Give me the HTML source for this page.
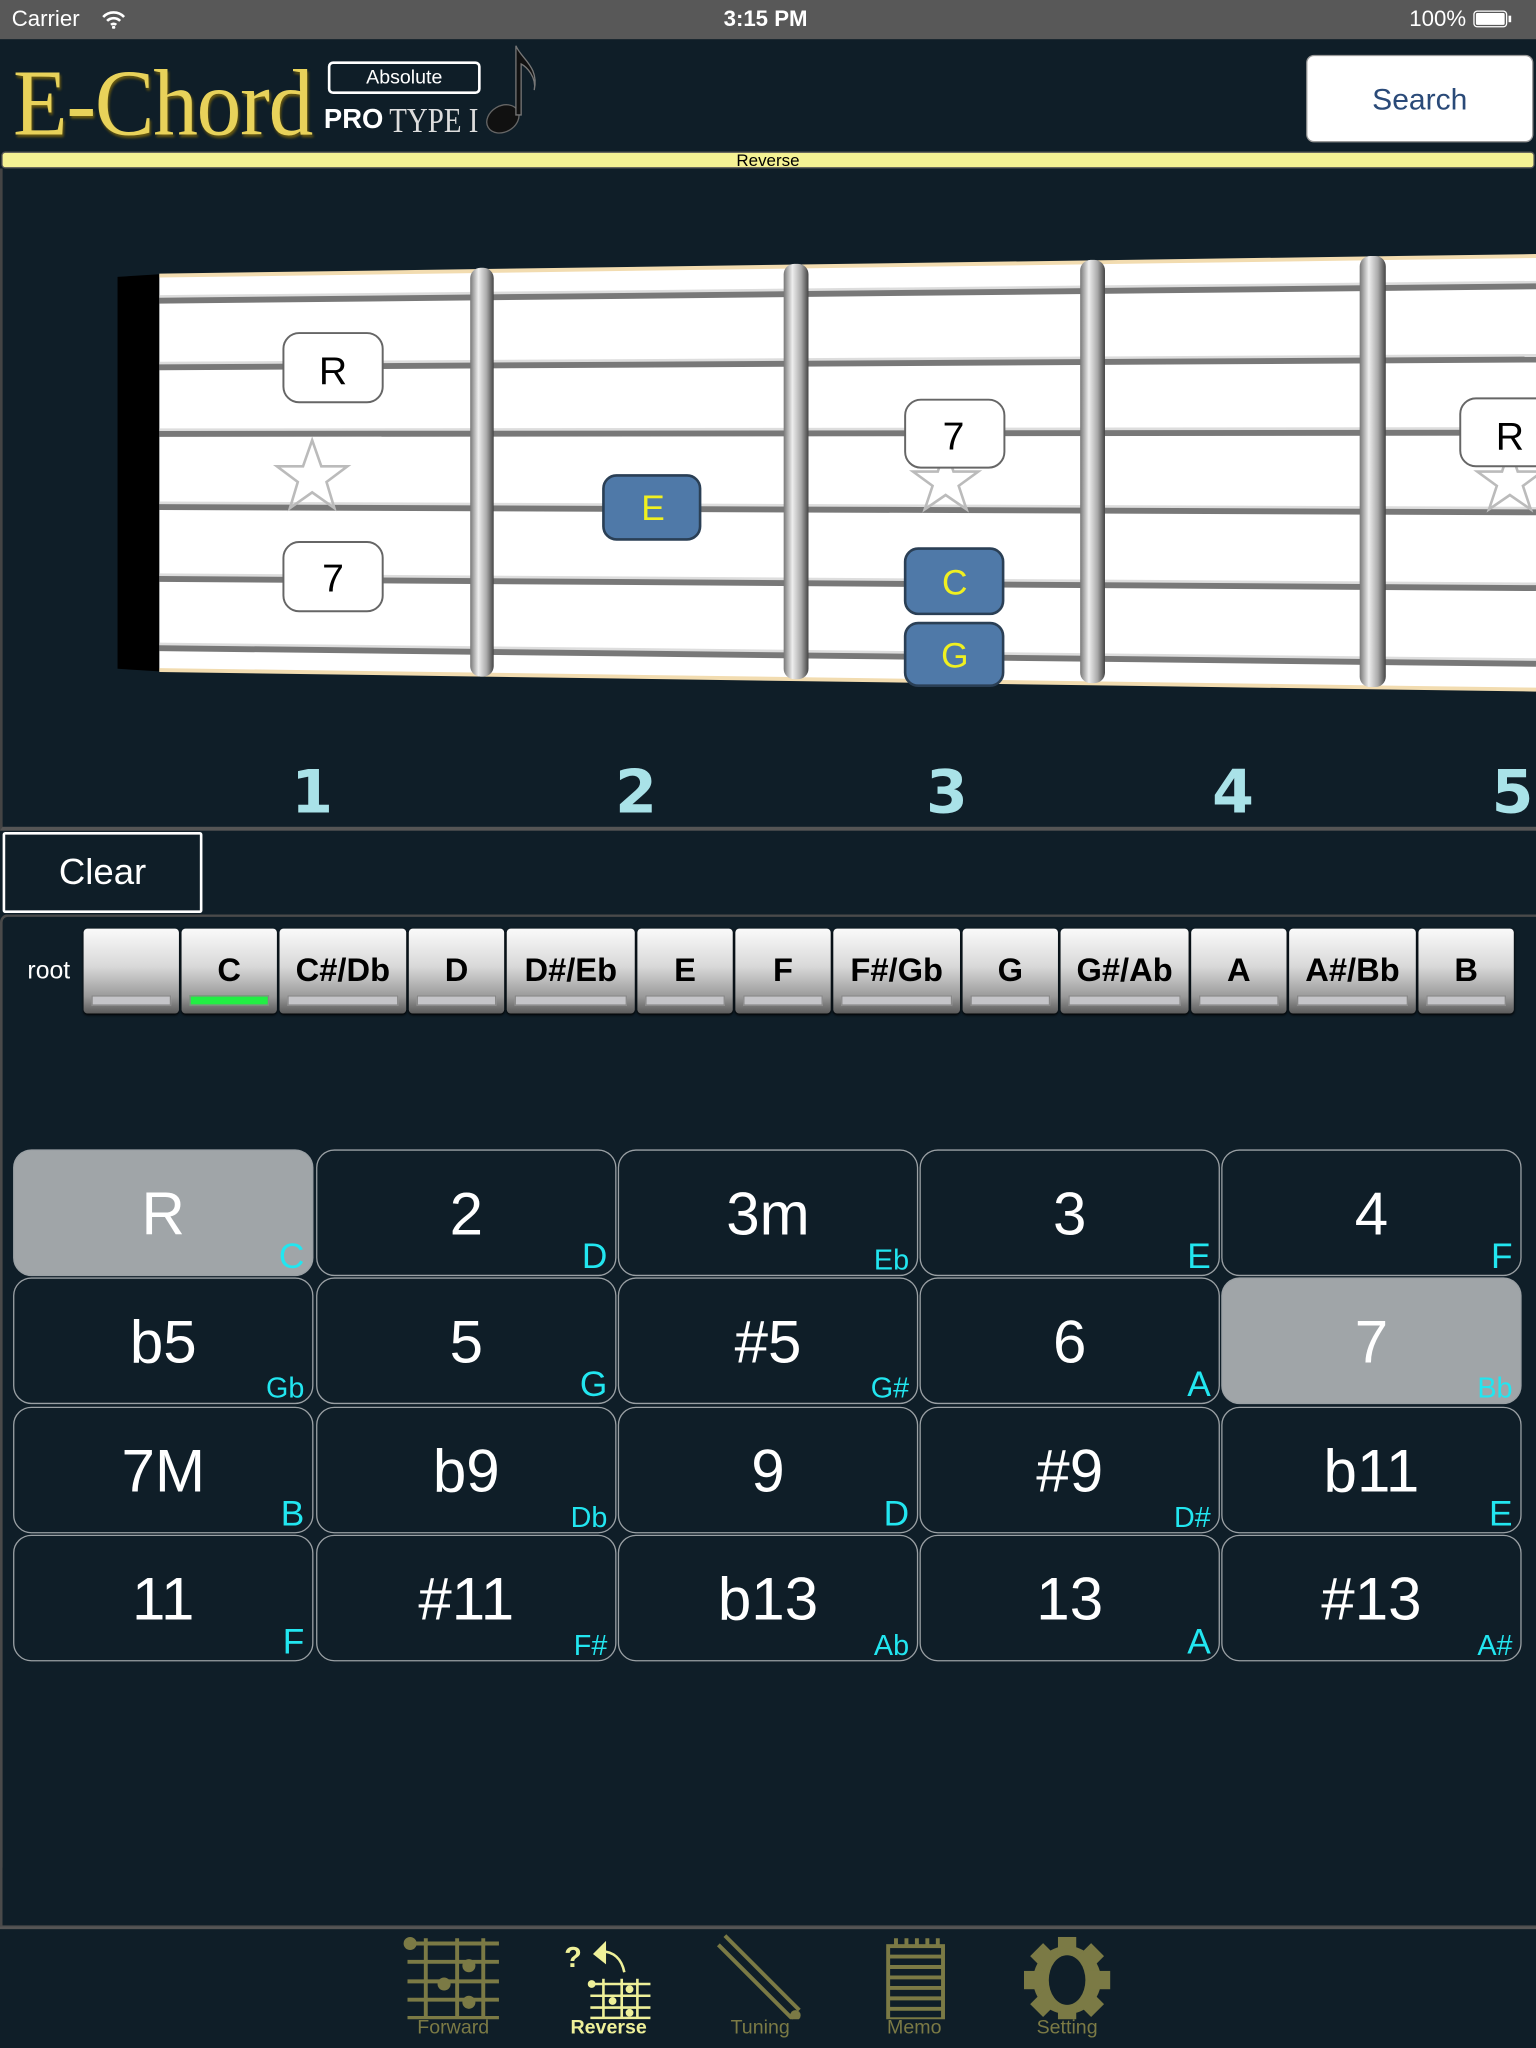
<!DOCTYPE html>
<html><head><meta charset="utf-8"><style>
*{margin:0;padding:0;box-sizing:border-box}
html,body{width:1536px;height:2048px;overflow:hidden;background:#0f1e28}
#w{position:absolute;left:0;top:0;width:1176px;height:1568px;transform:scale(1.306122);transform-origin:0 0;font-family:"Liberation Sans",sans-serif;background:#0f1e28;color:#fff}
.a{position:absolute}
.sb{left:0;top:0;width:1176px;height:30px;background:#585858;font-size:17px}
.rb{height:65px;top:711px;border-radius:3px;background:linear-gradient(#fafafa,#d8d8d8 45%,#9a9a9a 80%,#5a5a5a);color:#000;font-weight:bold;font-size:25px;text-align:center;line-height:64px;font-family:"Liberation Sans Narrow","Liberation Sans",sans-serif;box-shadow:0 1px 2px #000}
.rb i{position:absolute;left:6px;right:6px;bottom:6px;height:8px;background:#c4c4c8;border:1px solid #888}
.cell{width:230px;height:97px;border:1.5px solid #9aa0a4;border-radius:14px;text-align:center;font-size:46px;line-height:96px}
.cell b{position:absolute;right:6px;bottom:-2px;line-height:normal;font-weight:normal;color:#22e6f0;font-size:27px}
.cell b.s{font-size:22px}
.sel{background:#a0a5a8}
.tab{font-size:15px;color:#7b7a45;text-align:center;width:100px;top:1544px}
</style></head><body><div id="w">
<div class="a sb"><span class="a" style="left:9px;top:5px">Carrier</span>
<svg class="a" style="left:78px;top:8px" width="18" height="14" viewBox="0 0 18 14"><path d="M1 5a11 11 0 0 1 16 0M4 8a7 7 0 0 1 10 0M7 11a3 3 0 0 1 4 0" stroke="#fff" stroke-width="2" fill="none"/><circle cx="9" cy="13" r="1.3" fill="#fff"/></svg>
<span class="a" style="left:554px;top:5px;font-weight:bold;font-size:17px">3:15 PM</span>
<span class="a" style="left:1079px;top:5px">100%</span>
<div class="a" style="left:1128px;top:8px;width:26px;height:13px;border:1px solid #fff;border-radius:3px;padding:1px"><div style="width:100%;height:100%;background:#fff;border-radius:1px"></div></div>
<div class="a" style="left:1155px;top:12px;width:2px;height:5px;background:#fff"></div></div>

<div class="a" style="left:10px;top:38px;font-family:'Liberation Serif',serif;font-size:72px;color:#e8d25a;text-shadow:1px 2px 2px #6a5a10;letter-spacing:-1px;transform:scaleX(0.95);transform-origin:0 0">E-Chord</div>
<div class="a" style="left:251px;top:47px;width:117px;height:25px;border:2px solid #fff;border-radius:4px;text-align:center;font-size:15px;line-height:21px">Absolute</div>
<div class="a" style="left:248px;top:80px;font-size:21px;font-weight:bold">PRO</div>
<div class="a" style="left:298px;top:77px;font-family:'Liberation Serif',serif;font-size:27px;color:#ddd;transform:scaleX(0.82);transform-origin:0 0">TYPE I</div>
<svg class="a" style="left:368px;top:33px" width="50" height="72" viewBox="0 0 50 72"><ellipse cx="17" cy="58" rx="13" ry="10" transform="rotate(-30 17 58)" fill="#111" stroke="#666" stroke-width="1"/><path d="M27 55V2c4 10 18 16 14 34c2-10-6-18-10-20V55z" fill="#111" stroke="#777" stroke-width="1"/></svg>
<div class="a" style="left:1000px;top:42px;width:174px;height:67px;background:#fff;border-radius:6px;border:1px solid #999;color:#2a4a78;font-size:23px;text-align:center;line-height:66px">Search</div>

<div class="a" style="left:1px;top:116px;width:1174px;height:13px;background:#f5f294;border:1px solid #555;border-radius:3px;font-size:13px;color:#000;text-align:center;line-height:12px">Reverse</div>
<div class="a" style="left:0;top:129px;width:1176px;height:507px;border-left:2px solid #444;border-bottom:3px solid #555"></div>

<svg class="a" style="left:0;top:0" width="1176" height="640" viewBox="0 0 1176 640">
<defs><linearGradient id="fr" x1="0" x2="1"><stop offset="0" stop-color="#777"/><stop offset=".35" stop-color="#eee"/><stop offset=".7" stop-color="#aaa"/><stop offset="1" stop-color="#444"/></linearGradient></defs>
<polygon points="90,212 122,210 122,514 90,512" fill="#000"/>
<polygon points="122,210 1176,195 1176,529 122,514" fill="#fff"/>
<line x1="122" y1="211" x2="1176" y2="196" stroke="#f2dcb0" stroke-width="3"/>
<line x1="122" y1="513" x2="1176" y2="528" stroke="#f2dcb0" stroke-width="3"/>
<g stroke="#6a6a6a" stroke-width="5" opacity=".9">
<line x1="122" y1="230" x2="1176" y2="219"/><line x1="122" y1="281" x2="1176" y2="275"/><line x1="122" y1="332" x2="1176" y2="331"/><line x1="122" y1="388" x2="1176" y2="392"/><line x1="122" y1="443" x2="1176" y2="450"/><line x1="122" y1="496" x2="1176" y2="508"/></g>
<g stroke="#ddd" stroke-width="2">
<line x1="122" y1="227" x2="1176" y2="216"/><line x1="122" y1="278" x2="1176" y2="272"/><line x1="122" y1="329" x2="1176" y2="328"/><line x1="122" y1="385" x2="1176" y2="389"/><line x1="122" y1="440" x2="1176" y2="447"/><line x1="122" y1="493" x2="1176" y2="505"/></g>
<g fill="url(#fr)"><rect x="360" y="205" width="18" height="313" rx="8"/><rect x="600" y="202" width="19" height="318" rx="8"/><rect x="827" y="199" width="19" height="324" rx="8"/><rect x="1041" y="196" width="20" height="330" rx="8"/></g>
<g fill="none" stroke="#bbb" stroke-width="2"><path d="M239 337l7 20h20l-16 12 6 20-17-12-17 12 6-20-16-12h20z"/><path d="M724 343l6 18h19l-15 11 6 18-16-11-16 11 6-18-15-11h19z"/><path d="M1156 343l6 18h19l-15 11 6 18-16-11-16 11 6-18-15-11h19z"/></g>
<g fill="#fff" stroke="#666" stroke-width="1.5"><rect x="217" y="255" width="76" height="53" rx="12"/><rect x="217" y="415" width="76" height="53" rx="12"/><rect x="693" y="306" width="76" height="52" rx="12"/><rect x="1118" y="305" width="76" height="52" rx="12"/></g>
<g font-family="Liberation Sans,sans-serif" font-size="30" text-anchor="middle"><text x="255" y="294">R</text><text x="255" y="453">7</text><text x="730" y="344">7</text><text x="1156" y="344">R</text></g>
<g fill="#4f79a8" stroke="#2a3f55" stroke-width="2"><rect x="462" y="364" width="74" height="49" rx="10"/><rect x="693" y="420" width="75" height="50" rx="10"/><rect x="693" y="477" width="75" height="48" rx="10"/></g>
<g font-family="Liberation Sans,sans-serif" font-size="27" fill="#f0f020" text-anchor="middle"><text x="500" y="398">E</text><text x="731" y="455">C</text><text x="731" y="511">G</text></g>
<g font-family="DejaVu Sans,sans-serif" font-weight="bold" font-size="46" fill="#a9e2e8" text-anchor="middle"><text x="239" y="622">1</text><text x="487" y="622">2</text><text x="725" y="622">3</text><text x="944" y="622">4</text><text x="1158" y="622">5</text></g>
</svg>

<div class="a" style="left:2px;top:637px;width:153px;height:62px;border:2px solid #fff;border-radius:2px;font-size:28px;text-align:center;line-height:58px">Clear</div>
<div class="a" style="left:0;top:700px;width:1176px;height:776px;border:2px solid #4a4a4a;border-right:none;border-radius:6px 0 0 0"></div>
<div class="a" style="left:21px;top:733px;font-size:19px">root</div>
<div class="a rb" style="left:64px;width:73px"><i></i></div>
<div class="a rb" style="left:139px;width:73px">C<i style="background:#22ee44"></i></div>
<div class="a rb" style="left:214px;width:97px">C#/Db<i></i></div>
<div class="a rb" style="left:313px;width:73px">D<i></i></div>
<div class="a rb" style="left:388px;width:98px">D#/Eb<i></i></div>
<div class="a rb" style="left:488px;width:73px">E<i></i></div>
<div class="a rb" style="left:563px;width:73px">F<i></i></div>
<div class="a rb" style="left:638px;width:97px">F#/Gb<i></i></div>
<div class="a rb" style="left:737px;width:73px">G<i></i></div>
<div class="a rb" style="left:812px;width:98px">G#/Ab<i></i></div>
<div class="a rb" style="left:912px;width:73px">A<i></i></div>
<div class="a rb" style="left:987px;width:97px">A#/Bb<i></i></div>
<div class="a rb" style="left:1086px;width:73px">B<i></i></div>

<div class="a cell sel" style="left:10px;top:880px">R<b>C</b></div>
<div class="a cell" style="left:242px;top:880px">2<b>D</b></div>
<div class="a cell" style="left:473px;top:880px">3m<b class="s">Eb</b></div>
<div class="a cell" style="left:704px;top:880px">3<b>E</b></div>
<div class="a cell" style="left:935px;top:880px">4<b>F</b></div>
<div class="a cell" style="left:10px;top:978px">b5<b class="s">Gb</b></div>
<div class="a cell" style="left:242px;top:978px">5<b>G</b></div>
<div class="a cell" style="left:473px;top:978px">#5<b class="s">G#</b></div>
<div class="a cell" style="left:704px;top:978px">6<b>A</b></div>
<div class="a cell sel" style="left:935px;top:978px">7<b class="s">Bb</b></div>
<div class="a cell" style="left:10px;top:1077px">7M<b>B</b></div>
<div class="a cell" style="left:242px;top:1077px">b9<b class="s">Db</b></div>
<div class="a cell" style="left:473px;top:1077px">9<b>D</b></div>
<div class="a cell" style="left:704px;top:1077px">#9<b class="s">D#</b></div>
<div class="a cell" style="left:935px;top:1077px">b11<b>E</b></div>
<div class="a cell" style="left:10px;top:1175px">11<b>F</b></div>
<div class="a cell" style="left:242px;top:1175px">#11<b class="s">F#</b></div>
<div class="a cell" style="left:473px;top:1175px">b13<b class="s">Ab</b></div>
<div class="a cell" style="left:704px;top:1175px">13<b>A</b></div>
<div class="a cell" style="left:935px;top:1175px">#13<b class="s">A#</b></div>

<svg class="a" style="left:300px;top:1478px" width="570" height="68" viewBox="0 0 570 68">
<g stroke="#7b7a45" stroke-width="3" fill="none"><path d="M12 10h70M12 24h70M12 39h70M12 53h70M12 67h70M26 6v62M50 6v62M70 6v62"/><path d="M255 4l57 57M250 11l57 57"/><rect x="380" y="12" width="42" height="56"/><path d="M380 20h42M380 28h42M380 36h42M380 44h42M380 52h42M380 60h42M386 6v6M394 6v6M402 6v6M410 6v6M418 6v6"/></g>
<g fill="#7b7a45"><circle cx="14" cy="10" r="5"/><circle cx="59" cy="27" r="5"/><circle cx="40" cy="41" r="5"/><circle cx="59" cy="55" r="5"/><circle cx="309" cy="65" r="4"/>
<circle cx="517" cy="38" r="26"/>
<g transform="translate(517 38)"><rect x="-7" y="-33" width="14" height="66"/><rect x="-7" y="-33" width="14" height="66" transform="rotate(45)"/><rect x="-7" y="-33" width="14" height="66" transform="rotate(90)"/><rect x="-7" y="-33" width="14" height="66" transform="rotate(135)"/></g></g>
<ellipse cx="517" cy="38" rx="14" ry="19" fill="#0f1e28"/>
<g stroke="#eef099" stroke-width="2" fill="none"><path d="M152 41h46M152 50h46M152 59h46M152 67h46M162 37v31M176 37v31M188 37v31"/><path d="M178 32c-2-10-8-16-18-16"/></g>
<g fill="#eef099"><circle cx="153" cy="41" r="3"/><circle cx="182" cy="45" r="3"/><circle cx="169" cy="54" r="3"/><circle cx="182" cy="63" r="3"/><path d="M164 8l-10 10 10 8z"/><text x="132" y="28" font-family="Liberation Sans,sans-serif" font-weight="bold" font-size="22">?</text></g>
</svg>
<div class="a tab" style="left:297px">Forward</div>
<div class="a tab" style="left:416px;color:#eef099;font-weight:bold">Reverse</div>
<div class="a tab" style="left:532px">Tuning</div>
<div class="a tab" style="left:650px">Memo</div>
<div class="a tab" style="left:767px">Setting</div>
<div class="a" style="left:0;top:1475px;width:1176px;height:2px;background:#555"></div>
</div></body></html>
